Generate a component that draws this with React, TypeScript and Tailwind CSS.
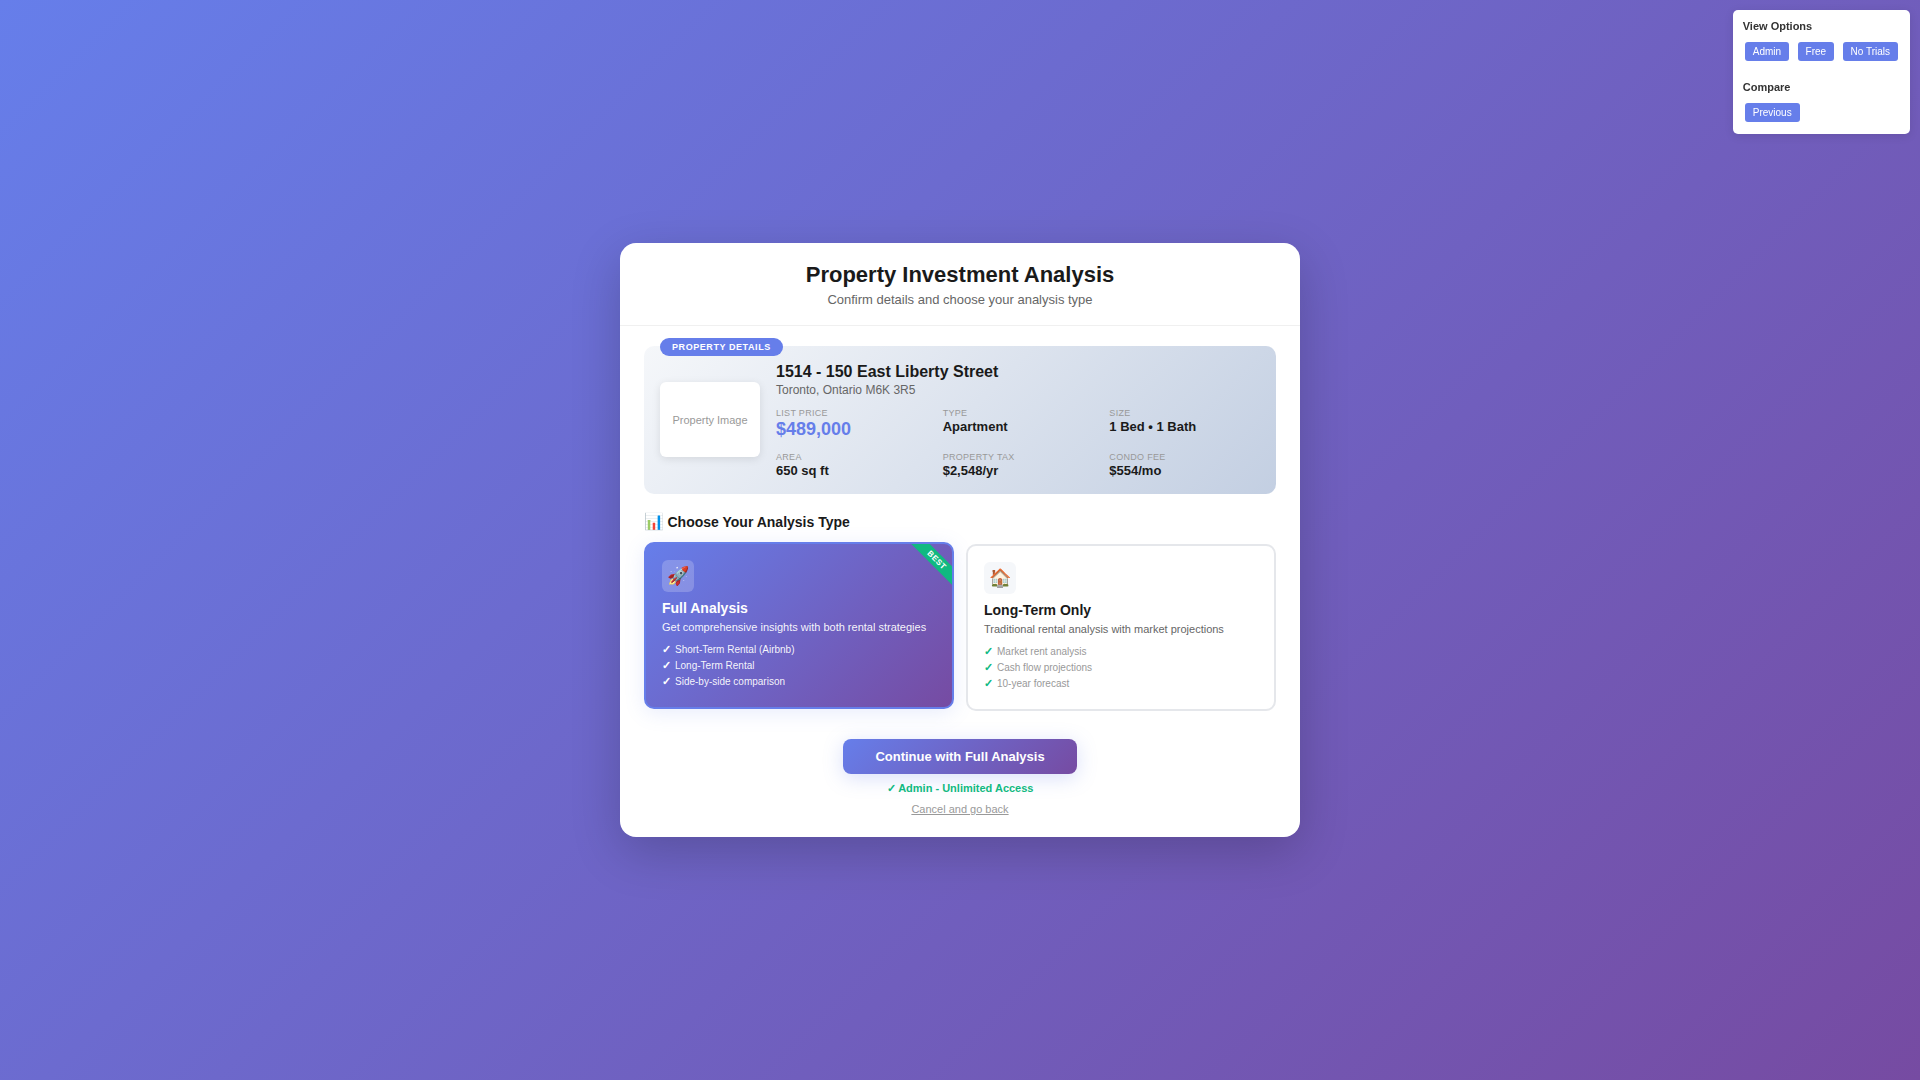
import React from "react";

const details = [
  { label: "List Price", value: "$489,000", highlight: true },
  { label: "Type", value: "Apartment" },
  { label: "Size", value: "1 Bed • 1 Bath" },
  { label: "Area", value: "650 sq ft" },
  { label: "Property Tax", value: "$2,548/yr" },
  { label: "Condo Fee", value: "$554/mo" },
];

function OptionButton({ children }: { children: React.ReactNode }) {
  return (
    <button className="m-[2px] rounded-[3px] bg-[#667eea] px-2 py-1 text-[10px] leading-[11px] text-white">
      {children}
    </button>
  );
}

function ViewOptions() {
  return (
    <div className="fixed top-[10px] right-[10px] h-[124px] rounded-[5px] bg-white p-[10px] text-[#333] shadow-[0_2px_10px_rgba(0,0,0,0.1)]">
      <h4 className="h-4 text-[11px] leading-[13px] font-bold">View Options</h4>
      <div className="mt-[2px] h-[23px] text-[16px] leading-[23px] whitespace-nowrap">
        <OptionButton>Admin</OptionButton> <OptionButton>Free</OptionButton> <OptionButton>No Trials</OptionButton>
      </div>
      <h4 className="mt-5 h-4 text-[11px] leading-[13px] font-bold">Compare</h4>
      <div className="mt-[2px] h-[23px] text-[16px] leading-[23px]">
        <OptionButton>Previous</OptionButton>
      </div>
    </div>
  );
}

function PropertyCard() {
  return (
    <section className="relative flex h-[148px] items-center gap-4 rounded-[10px] bg-[linear-gradient(135deg,#f5f7fa_0%,#c3cfe2_100%)] p-4">
      <div className="absolute -top-2 left-4 h-[18px] rounded-[10px] bg-[#667eea] px-3 text-[9px] leading-[18px] font-bold tracking-[0.57px] text-white uppercase">
        Property Details
      </div>
      <div className="-mt-px flex h-[75px] w-[100px] shrink-0 items-center justify-center rounded-[6px] bg-white pt-px text-[11px] text-[#999] shadow-[0_2px_8px_rgba(0,0,0,0.1)]">
        Property Image
      </div>
      <div className="flex-1">
        <h2 className="mt-px text-[16px] leading-[18px] font-bold">1514 - 150 East Liberty Street</h2>
        <p className="mt-[3px] text-[12px] leading-[13px] text-[#666]">Toronto, Ontario M6K 3R5</p>
        <div className="mt-[11px] grid grid-cols-3 gap-x-4 gap-y-3">
          {details.map((d) => (
            <div key={d.label}>
              <div className="mb-px text-[9px] leading-[10px] tracking-[0.3px] text-[#999] uppercase">{d.label}</div>
              <div
                className={
                  d.highlight
                    ? "text-[18px] leading-[21px] font-bold text-[#667eea]"
                    : "text-[13px] leading-[15px] font-bold"
                }
              >
                {d.value}
              </div>
            </div>
          ))}
        </div>
      </div>
    </section>
  );
}

interface AnalysisProps {
  icon: string;
  title: string;
  text: string;
  features: string[];
  best?: boolean;
}

function AnalysisCard({ icon, title, text, features, best }: AnalysisProps) {
  return (
    <div
      className={
        best
          ? "relative h-[167px] -translate-y-0.5 overflow-hidden rounded-[10px] border-2 border-[#667eea] bg-[linear-gradient(135deg,#667eea_0%,#764ba2_100%)] p-4 text-white shadow-[0_4px_20px_rgba(102,126,234,0.15)]"
          : "relative h-[167px] overflow-hidden rounded-[10px] border-2 border-[#e5e7eb] bg-white p-4"
      }
    >
      {best && (
        <div className="absolute top-[9.5px] right-[-20.5px] h-[13px] w-[72px] rotate-45 bg-[#10b981] pr-px text-center text-[8px] leading-[13px] font-bold tracking-[0.4px]">
          BEST
        </div>
      )}
      <div
        className={
          best
            ? "flex size-8 items-center justify-center rounded-[6px] bg-white/20 text-[18px]"
            : "flex size-8 items-center justify-center rounded-[6px] bg-[#f5f7fa] text-[18px]"
        }
      >
        {icon}
      </div>
      <h3 className="mt-2 text-[14px] leading-4 font-bold">{title}</h3>
      <p className={best ? "mt-[5px] text-[11px] leading-[13px] text-white/95" : "mt-[5px] text-[11px] leading-[13px] text-[#666]"}>
        {text}
      </p>
      <ul className="mt-2">
        {features.map((f) => (
          <li
            key={f}
            className={
              best
                ? "flex h-4 items-center gap-1 text-[10px] leading-3 text-white/95"
                : "flex h-4 items-center gap-1 text-[10px] leading-3 text-[#999]"
            }
          >
            <span className={best ? "-mt-0.5 text-[11px] font-bold text-white" : "-mt-0.5 text-[11px] font-bold text-[#10b981]"}>✓</span>
            <span>{f}</span>
          </li>
        ))}
      </ul>
    </div>
  );
}

export default function App() {
  return (
    <div className="flex min-h-screen items-center justify-center bg-[linear-gradient(135deg,#667eea_0%,#764ba2_100%)] font-['Liberation_Sans',sans-serif] text-[#1a1a1a]">
      <ViewOptions />
      <main className="h-[594px] w-[680px] overflow-hidden rounded-[16px] bg-white shadow-[0_15px_50px_rgba(0,0,0,0.2)]">
        <header className="h-[83px] border-b border-[#f0f0f0] pt-[19px] text-center">
          <h1 className="text-[22px] leading-[25px] font-bold">Property Investment Analysis</h1>
          <p className="mt-[5px] text-[13px] leading-[15px] text-[#666]">Confirm details and choose your analysis type</p>
        </header>
        <div className="px-6 pt-5">
          <PropertyCard />
          <h2 className="mt-5 flex h-4 items-center gap-[3.5px] text-[14px] leading-4 font-bold">
            <span className="text-[16px]">📊</span>
            <span>Choose Your Analysis Type</span>
          </h2>
          <div className="mt-[14px] grid grid-cols-2 gap-3">
            <AnalysisCard
              best
              icon="🚀"
              title="Full Analysis"
              text="Get comprehensive insights with both rental strategies"
              features={["Short-Term Rental (Airbnb)", "Long-Term Rental", "Side-by-side comparison"]}
            />
            <AnalysisCard
              icon="🏠"
              title="Long-Term Only"
              text="Traditional rental analysis with market projections"
              features={["Market rent analysis", "Cash flow projections", "10-year forecast"]}
            />
          </div>
          <div className="mt-7 flex flex-col items-center">
            <button className="h-[35px] rounded-[8px] bg-[linear-gradient(135deg,#667eea_0%,#764ba2_100%)] px-8 text-[13px] leading-[15px] font-bold text-white shadow-[0_4px_20px_rgba(102,126,234,0.25)]">
              Continue with Full Analysis
            </button>
            <div className="mt-2 text-[11px] leading-[13px] font-bold text-[#10b981]">✓ Admin - Unlimited Access</div>
            <a className="mt-2 text-[11px] leading-[13px] text-[#999] underline">Cancel and go back</a>
          </div>
        </div>
      </main>
    </div>
  );
}
